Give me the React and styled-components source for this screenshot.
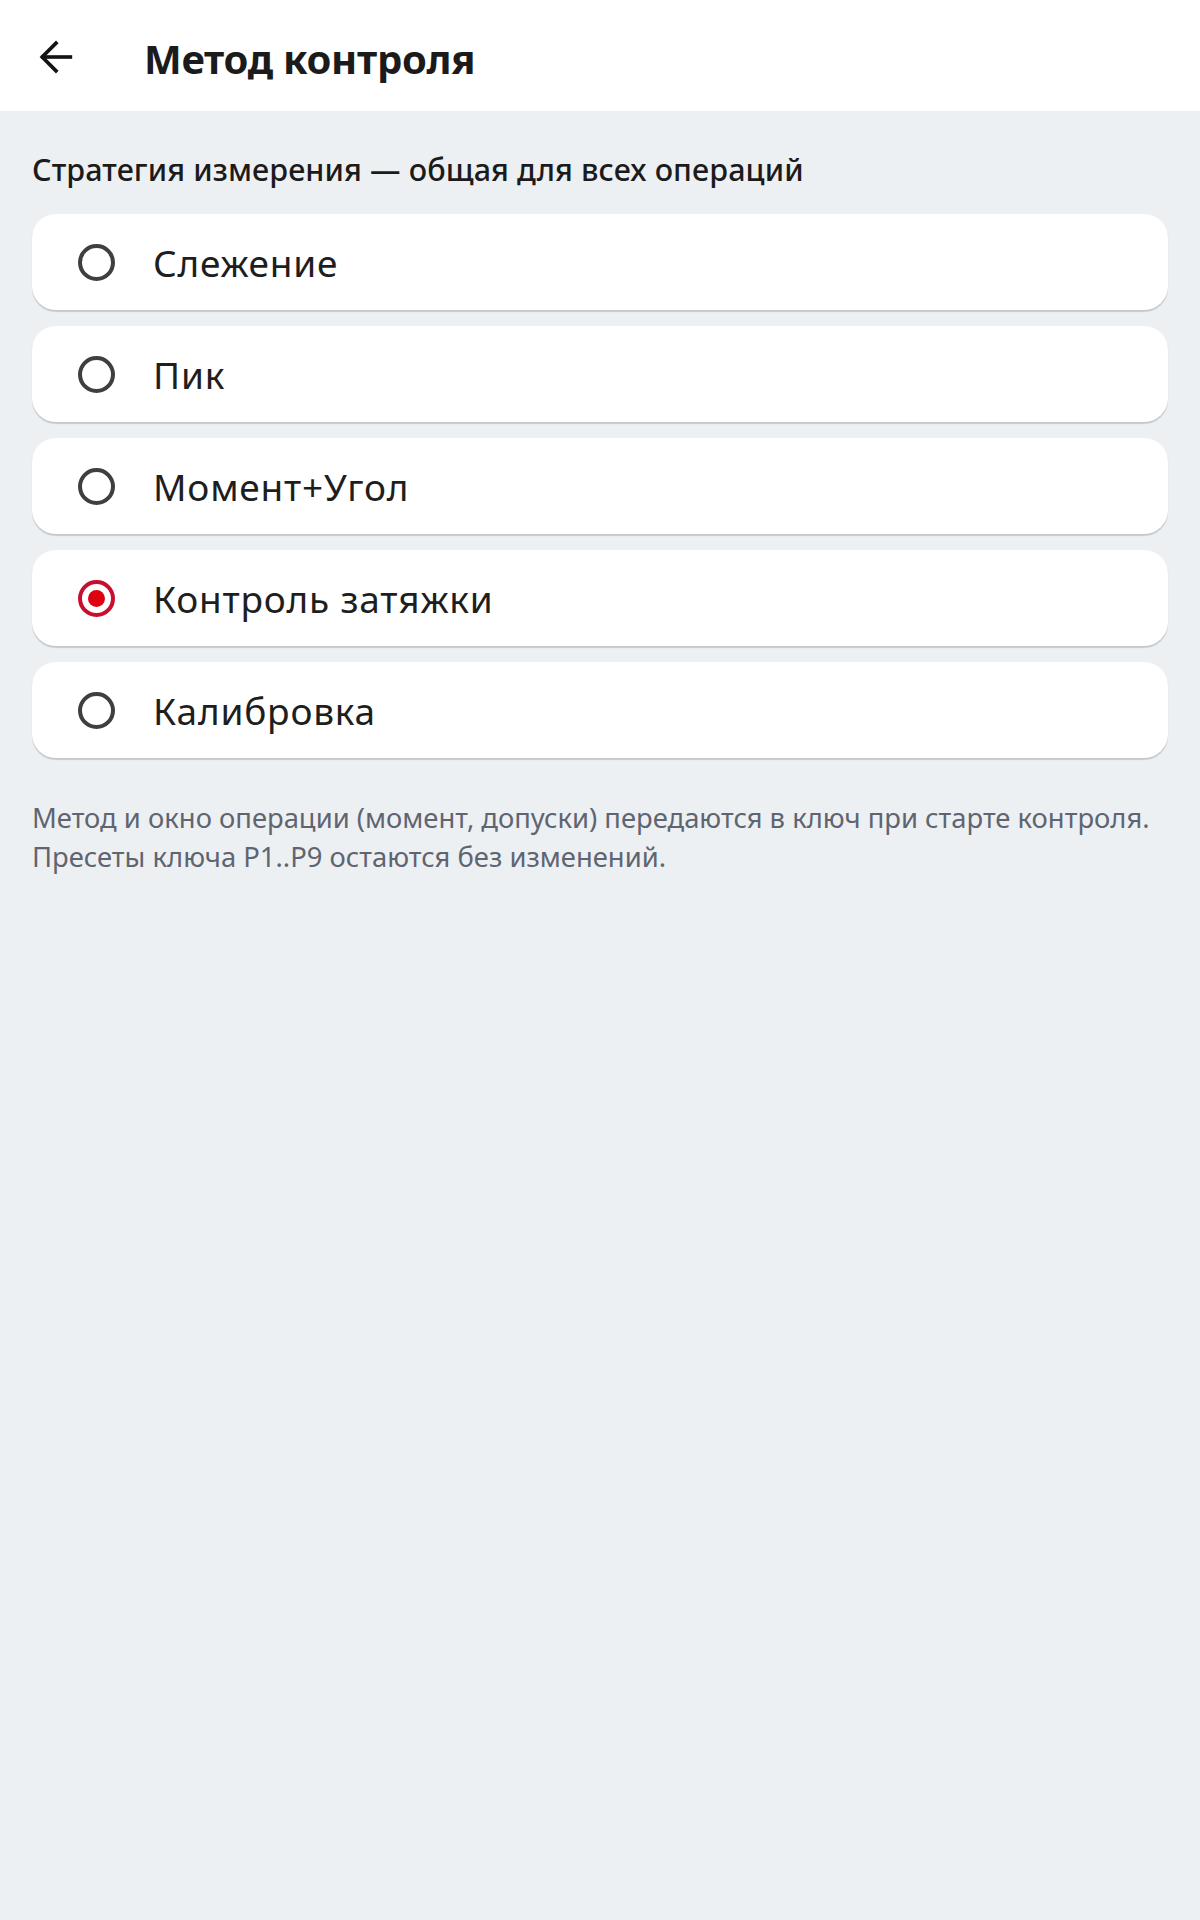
import styled, { createGlobalStyle } from 'styled-components';

const GlobalStyle = createGlobalStyle`
  html, body {
    margin: 0;
    padding: 0;
    background: #edf0f3;
  }
  body {
    font-family: "Noto Sans", "Open Sans", sans-serif;
    color: #1b1b1b;
  }
`;

const options = ['Слежение', 'Пик', 'Момент+Угол', 'Контроль затяжки', 'Калибровка'];

// ------------------------------
// Header
// ------------------------------

const Page = styled.div`
  min-height: 1920px;
  background: #edf0f3;
`;

const Header = styled.header`
  display: flex;
  align-items: center;
  height: 111px;
  padding: 2px 0 0 33px;
  background: #ffffff;
  box-sizing: border-box;
`;

const BackButton = styled.button`
  display: flex;
  align-items: center;
  justify-content: center;
  width: 46px;
  height: 46px;
  padding: 0;
  border: none;
  background: transparent;
  color: #141414;
  cursor: pointer;
`;

const Title = styled.h1`
  margin: 4px 0 0 65px;
  font-size: 40px;
  font-weight: 700;
  letter-spacing: -0.3px;
`;

// ------------------------------
// Content
// ------------------------------

const Content = styled.main`
  padding: 40px 32px 0;
`;

const SectionTitle = styled.h2`
  margin: 0 0 27px;
  font-size: 30.5px;
  font-weight: 500;
  line-height: 36px;
  letter-spacing: 0.1px;
`;

const OptionList = styled.div`
  display: flex;
  flex-direction: column;
  gap: 16px;
`;

const OptionCard = styled.label`
  display: flex;
  align-items: center;
  gap: 38px;
  height: 96px;
  padding: 0 0 0 46px;
  background: #ffffff;
  border-radius: 24px;
  box-shadow: 0 1.5px 1px rgba(0, 0, 0, 0.16);
  box-sizing: border-box;
  cursor: pointer;
`;

const Radio = styled.span`
  position: relative;
  flex: 0 0 auto;
  width: 37px;
  height: 37px;
  border-radius: 50%;
  border: 4px solid ${props => (props.$checked ? '#c8102e' : '#403f3e')};
  box-sizing: border-box;

  &::after {
    content: '';
    display: ${props => (props.$checked ? 'block' : 'none')};
    position: absolute;
    inset: 6px;
    border-radius: 50%;
    background: #e1000f;
  }
`;

const OptionLabel = styled.span`
  font-size: 37px;
  font-weight: 400;
  letter-spacing: 0.8px;
  color: #1e1e1e;
`;

const Note = styled.p`
  margin: 40px 0 0;
  font-size: 27.4px;
  line-height: 39px;
  color: #5f6570;
`;

export default function App() {
  return (
    <Page>
      <GlobalStyle />
      <Header>
        <BackButton aria-label="Назад">
          <svg width="46" height="46" viewBox="0 0 24 24" fill="none" stroke="currentColor" strokeWidth="1.9" strokeLinecap="square" strokeLinejoin="miter">
            <path d="M19.5 12H5.2" />
            <path d="M12 4.8L4.8 12l7.2 7.2" />
          </svg>
        </BackButton>
        <Title>Метод контроля</Title>
      </Header>
      <Content>
        <SectionTitle>Стратегия измерения — общая для всех операций</SectionTitle>
        <OptionList>
          {options.map(name => (
            <OptionCard key={name}>
              <Radio $checked={name === 'Контроль затяжки'} />
              <OptionLabel>{name}</OptionLabel>
            </OptionCard>
          ))}
        </OptionList>
        <Note>
          Метод и окно операции (момент, допуски) передаются в ключ при старте контроля.
          <br />
          Пресеты ключа P1..P9 остаются без изменений.
        </Note>
      </Content>
    </Page>
  );
}
